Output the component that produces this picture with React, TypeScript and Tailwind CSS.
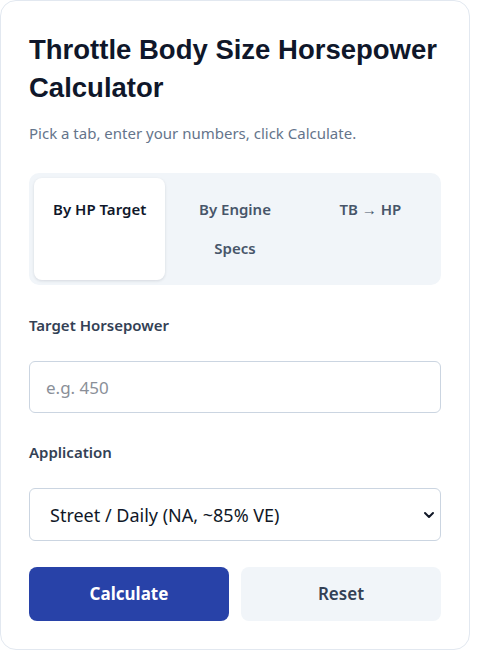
import * as React from "react";

const tabs = [
    { id: "hp", label: "By HP Target" },
    { id: "engine", label: "By Engine Specs" },
    { id: "tb", label: "TB → HP" },
];

export default function App() {
    const [tab, setTab] = React.useState("hp");
    const [hp, setHp] = React.useState("");
    const [app, setApp] = React.useState("street");

    return (
        <div className="min-h-screen bg-white" style={{ fontFamily: '"Noto Sans", "Open Sans", sans-serif' }}>
            <div className="w-[470px] rounded-2xl border border-[#e2e8f0] bg-white p-7">
                <h1
                    className="mt-[2px] text-[27.5px] font-bold leading-[38px] text-[#0f172a]"
                    style={{ fontFamily: '"Liberation Sans", Arial, sans-serif' }}
                >
                    Throttle Body Size Horsepower Calculator
                </h1>
                <p className="mt-[16px] text-[15px] leading-5 text-[#64748b]">
                    Pick a tab, enter your numbers, click Calculate.
                </p>

                {/* Tabs */}
                <div className="mt-[30px] grid grid-cols-3 gap-1 rounded-[10px] bg-[#f1f5f9] p-[5px]">
                    {tabs.map((t) => (
                        <button
                            key={t.id}
                            type="button"
                            onClick={() => setTab(t.id)}
                            className={[
                                "flex cursor-pointer items-start justify-center rounded-lg px-4 py-3 text-center text-[15px] font-semibold leading-[39px]",
                                tab === t.id
                                    ? "bg-white text-[#0f172a] shadow-[0_1px_3px_rgba(15,23,42,0.12)]"
                                    : "text-[#475569]",
                            ].join(" ")}
                        >
                            {t.label}
                        </button>
                    ))}
                </div>

                <label className="mt-[30px] block text-[15px] font-semibold leading-5 text-[#334155]">
                    Target Horsepower
                </label>
                <input
                    type="number"
                    placeholder="e.g. 450"
                    value={hp}
                    onChange={(e) => setHp(e.target.value)}
                    className="mt-[26px] block h-[52px] w-full rounded-md border border-[#cbd5e1] px-4 text-[17px] text-[#0f172a] placeholder:text-[#8a8f98] focus:outline-none"
                />

                <label className="mt-[29px] block text-[15px] font-semibold leading-5 text-[#334155]">
                    Application
                </label>
                <div className="relative mt-[26px]">
                    <select
                        value={app}
                        onChange={(e) => setApp(e.target.value)}
                        className="block h-[53px] w-full appearance-none rounded-md border border-[#cbd5e1] bg-white pl-5 pr-10 text-lg text-[#111827] focus:outline-none"
                    >
                        <option value="street">Street / Daily (NA, ~85% VE)</option>
                        <option value="perf">Performance (NA, ~95% VE)</option>
                        <option value="boost">Boosted</option>
                    </select>
                    <svg
                        className="pointer-events-none absolute right-[6px] top-1/2 -translate-y-1/2"
                        width="12"
                        height="12"
                        viewBox="0 0 12 12"
                        fill="none"
                    >
                        <path d="M2 4l4 4 4-4" stroke="#111827" strokeWidth="2" strokeLinecap="round" strokeLinejoin="round" />
                    </svg>
                </div>

                <div className="mt-[26px] grid grid-cols-2 gap-3">
                    <button
                        type="button"
                        className="h-[54px] cursor-pointer rounded-lg bg-[#2842a8] text-[17px] font-bold text-white"
                    >
                        Calculate
                    </button>
                    <button
                        type="button"
                        onClick={() => {
                            setHp("");
                            setApp("street");
                        }}
                        className="h-[54px] cursor-pointer rounded-lg bg-[#f1f5f9] text-[17px] font-semibold text-[#334155]"
                    >
                        Reset
                    </button>
                </div>
            </div>
        </div>
    );
}
